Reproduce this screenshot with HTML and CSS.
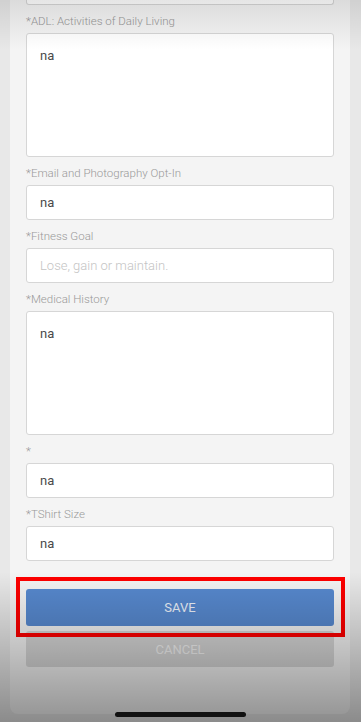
FILE: index.html
```html
<!DOCTYPE html>
<html lang="en">
<head>
    <meta charset="UTF-8">
    <meta name="viewport" content="width=device-width, initial-scale=1.0">
    <title>Member Profile</title>
    <link rel="stylesheet" href="styles.css">
</head>
<body>
    <div class="panel">
        <!-- хвост предыдущего поля, обрезан сверху -->
        <div class="cut-input"></div>

        <div class="field">
            <label>*ADL: Activities of Daily Living</label>
            <textarea class="input area">na</textarea>
        </div>
        <div class="field">
            <label>*Email and Photography Opt-In</label>
            <input class="input" type="text" value="na">
        </div>
        <div class="field">
            <label>*Fitness Goal</label>
            <input class="input" type="text" placeholder="Lose, gain or maintain.">
        </div>
        <div class="field">
            <label>*Medical History</label>
            <textarea class="input area">na</textarea>
        </div>
        <div class="field">
            <label>*</label>
            <input class="input" type="text" value="na">
        </div>
        <div class="field">
            <label>*TShirt Size</label>
            <input class="input" type="text" value="na">
        </div>

        <div class="actions">
            <div class="highlight">
                <button class="btn save">SAVE</button>
            </div>
            <button class="btn cancel">CANCEL</button>
        </div>
    </div>

    <div class="shade-top"></div>
    <div class="shade-bottom"></div>
    <div class="home-bar"></div>
</body>
</html>
```

FILE: styles.css
```css
/* Основные стили */
body {
    margin: 0;
    height: 722px;
    overflow: hidden;
    background: #e8e8e8;
    font-family: Roboto, "Noto Sans", sans-serif;
    position: relative;
}
.panel {
    margin: 0 11px 0 10px;
    height: 714px;
    background: #f4f4f4;
    padding: 0 16px;
    box-sizing: border-box;
    border-radius: 0 0 8px 8px;
}
.cut-input {
    height: 5px;
    background: #fff;
    border: 1px solid #d6d6d6;
    border-top: none;
    border-radius: 0 0 3px 3px;
    box-sizing: border-box;
}
.field {
    margin-top: 8px;
}
.field label {
    display: block;
    height: 17px;
    line-height: 17px;
    margin-bottom: 3px;
    font-size: 11.5px;
    font-weight: 300;
    color: #999;
}
.input {
    display: block;
    width: 100%;
    height: 35px;
    box-sizing: border-box;
    background: #fff;
    border: 1px solid #d6d6d6;
    border-radius: 3px;
    padding: 0 13px;
    font-family: inherit;
    font-size: 13px;
    color: #4a4a4a;
    outline: none;
}
.input::placeholder {
    color: #c4c4c4;
    font-weight: 300;
}
.area {
    height: 124px;
    padding: 14px 13px;
    line-height: 16px;
    resize: none;
}
.actions {
    margin-top: 28px;
}
.highlight {
    position: relative;
}
.highlight::after {
    content: "";
    position: absolute;
    top: -12px;
    left: -10px;
    right: -11px;
    bottom: -11px;
    border: 4px solid #f00;
    pointer-events: none;
}
.btn {
    display: block;
    width: 100%;
    border: none;
    border-radius: 3px;
    font-family: inherit;
    font-size: 13px;
    cursor: pointer;
}
.save {
    height: 37px;
    background: #5789cf;
    color: #eef3fb;
}
.cancel {
    height: 36px;
    margin-top: 5px;
    background: #d6d6d6;
    color: #f4f4f4;
}
.shade-top {
    position: absolute;
    top: 0;
    left: 0;
    right: 0;
    height: 50px;
    background: linear-gradient(rgba(0, 0, 0, 0.1), rgba(0, 0, 0, 0));
    pointer-events: none;
}
.shade-bottom {
    position: absolute;
    bottom: 0;
    left: 0;
    right: 0;
    height: 150px;
    background: linear-gradient(rgba(0, 0, 0, 0), rgba(0, 0, 0, 0.4));
    pointer-events: none;
}
.home-bar {
    position: absolute;
    left: 115px;
    bottom: 5px;
    width: 131px;
    height: 5px;
    border-radius: 3px;
    background: #111;
}
```
